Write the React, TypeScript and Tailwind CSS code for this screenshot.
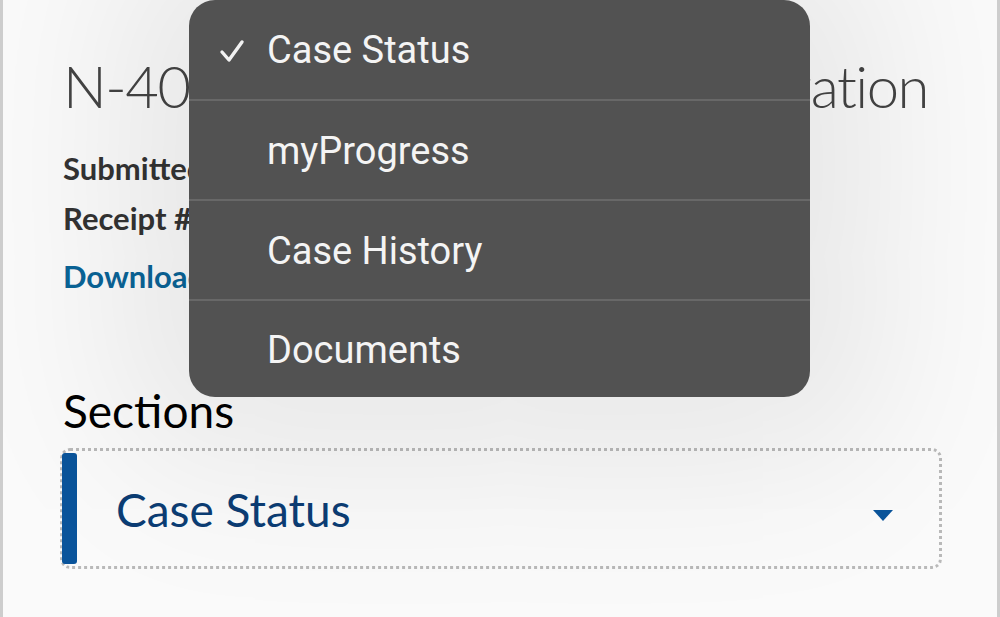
import { useState } from 'react';

const items = ['Case Status', 'myProgress', 'Case History', 'Documents'];

function App() {
  const [selected, setSelected] = useState('Case Status');

  return (
    <div className="relative h-[617px] w-full overflow-hidden bg-[#fafafa] border-x-[3px] border-[#cdcdcd] font-['Lato','Liberation_Sans',sans-serif]">
      <div className="pl-[57px] pr-[55px] pt-[50px]">
        <h1 className="pl-[3px] text-[58px] leading-[72px] font-light tracking-[-1.5px] text-[#444] whitespace-nowrap">
          N-400, Application for Naturalization
        </h1>
        <div className="mt-[21px] pl-[3px] text-[31px] leading-[50px] font-bold text-[#333]">
          <p>Submitted: May 12, 2023</p>
          <p>Receipt #: IOE0912345678</p>
        </div>
        <a className="mt-[8px] block pl-[3px] text-[31px] leading-[50px] font-bold text-[#0a6497]">Download a copy of your receipt</a>
        <h2 className="mt-[82px] pl-[3px] text-[46px] leading-[56px] text-black">Sections</h2>
        <div className="mt-[9px] flex h-[121px] items-center rounded-[10px] border-[3px] border-dotted border-[#b9b9b9] py-[2px]">
          <div className="-ml-[1px] h-full w-[15px] rounded-[3px] bg-[#0a549b]" />
          <span className="ml-[39px] mt-[1px] flex-1 text-[46px] text-[#0c3d74]">{selected}</span>
          <svg width="20" height="12" viewBox="0 0 20 12" className="mr-[46px] mt-[15px]">
            <path d="M0 0 H20 L10 11 Z" fill="#0a549b" />
          </svg>
        </div>
      </div>

      <div className="absolute left-[186px] top-0 w-[621px] overflow-hidden rounded-[26px] bg-[#525252] shadow-[0_0_170px_70px_rgba(0,0,0,0.08)] font-['Roboto','Inter',sans-serif]">
        {items.map((item, i) => (
          <button
            key={item}
            onClick={() => setSelected(item)}
            className={`flex w-full items-center pt-[2px] text-left ${i === 0 ? 'h-[99px]' : i === 3 ? 'h-[98px] border-t-2 border-[#686868]' : 'h-[100px] border-t-2 border-[#686868]'}`}
          >
            <span className="flex w-[78px] justify-center pl-[8px]">
              {selected === item && (
                <svg width="26" height="24" viewBox="0 0 26 24">
                  <path d="M3 13 L10 21 L23 3" stroke="#f2f2f2" strokeWidth="3.4" fill="none" strokeLinecap="round" strokeLinejoin="round" />
                </svg>
              )}
            </span>
            <span className="text-[38px] text-[#f4f4f4]">{item}</span>
          </button>
        ))}
      </div>
    </div>
  );
}

export default App;
